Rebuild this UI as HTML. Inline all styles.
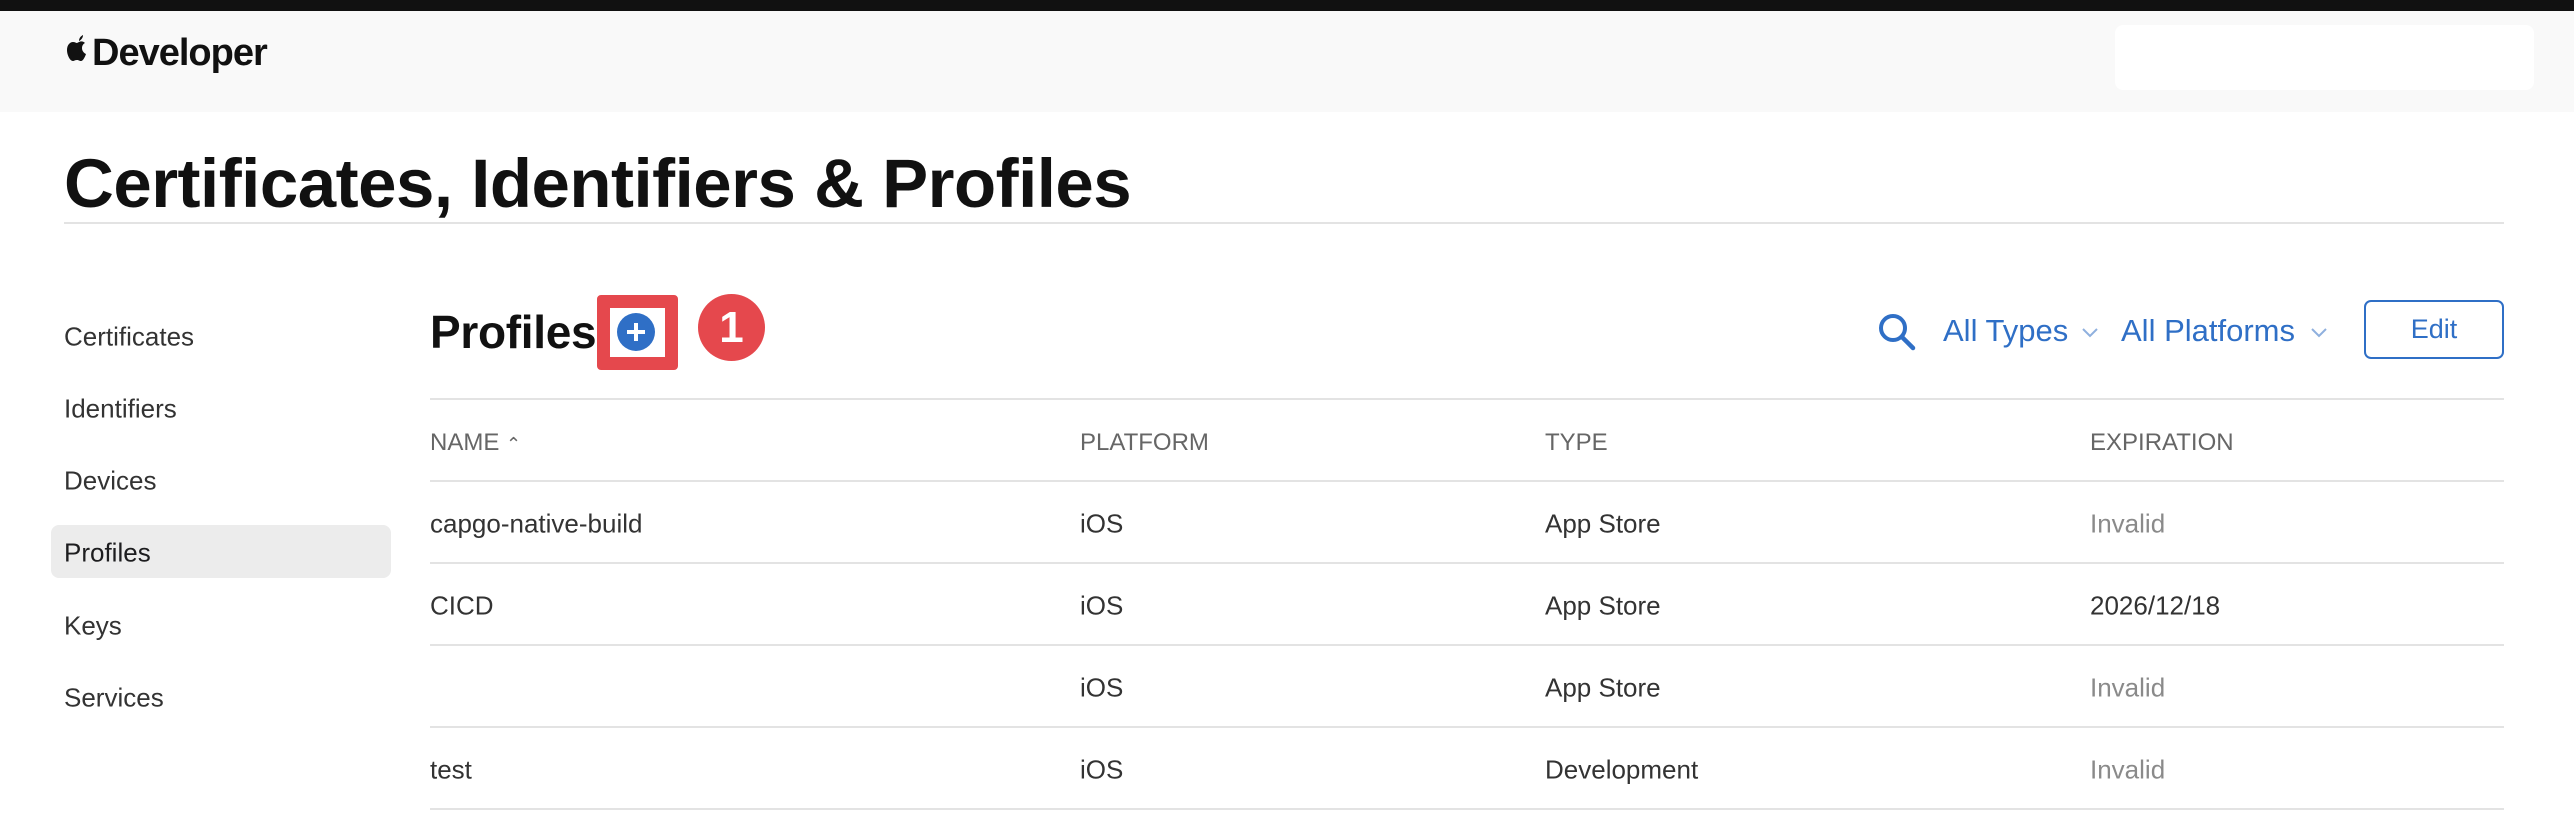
<!DOCTYPE html>
<html><head><meta charset="utf-8"><style>
*{margin:0;padding:0;box-sizing:border-box}
body{width:2574px;height:834px;background:#fff;font-family:"Liberation Sans",sans-serif;color:#1d1d1f;position:relative;overflow:hidden}
.a{position:absolute;white-space:nowrap}
.bar{left:0;top:0;width:2574px;height:11px;background:#111}
.hdr{left:0;top:11px;width:2574px;height:101px;background:#f9f9f9}
.box{left:2115px;top:25px;width:419px;height:65px;background:#fff;border-radius:8px}
.side{left:64px;font-size:26px;color:#333;transform:translateY(-50%)}
.cell{font-size:26px;color:#333;transform:translateY(-50%)}
.th{font-size:24px;color:#666;transform:translateY(-50%)}
.line{height:2px;background:#e3e3e3}
.blue{color:#2f6fc6}
.gray{color:#8a8a8a}
</style></head><body>
<div class="a bar"></div>
<div class="a hdr"></div>
<div class="a box"></div>
<div class="a" style="left:92px;top:32px;font-size:38px;letter-spacing:-1px;color:#111;font-weight:bold">Developer</div>
<svg class="a" style="left:66px;top:33px" width="26" height="32" viewBox="0 0 26 32"><path fill="#111" d="M13 9c2-1 4-1 6 1-2 1-3 3-3 5 0 3 2 5 4 6-1 3-3 7-5 7-2 0-2-1-4-1s-3 1-4 1c-3 0-6-6-6-11 0-5 3-8 6-8 2 0 3 1 4 1zM13 8c0-3 2-5 4-6 0 3-2 5-4 6z"/></svg>
<div class="a" style="left:64px;top:144px;font-size:69px;font-weight:bold;color:#111;letter-spacing:-0.5px">Certificates, Identifiers &amp; Profiles</div>
<div class="a line" style="left:64px;top:222px;width:2440px"></div>

<div class="a" style="left:51px;top:525px;width:340px;height:53px;background:#ececec;border-radius:8px"></div>
<div class="a side" style="top:337px">Certificates</div>
<div class="a side" style="top:409px">Identifiers</div>
<div class="a side" style="top:481px">Devices</div>
<div class="a side" style="top:553px;color:#1d1d1f">Profiles</div>
<div class="a side" style="top:626px">Keys</div>
<div class="a side" style="top:698px">Services</div>

<div class="a" style="left:430px;top:305px;font-size:46px;font-weight:bold;color:#111;letter-spacing:-0.3px">Profiles</div>
<div class="a" style="left:597px;top:295px;width:81px;height:75px;border:13px solid #e5484d;border-radius:4px;background:#fff"></div>
<div class="a" style="left:617px;top:313px;width:38px;height:38px;border-radius:50%;background:#2f6fc6"></div>
<div class="a" style="left:627px;top:330px;width:18px;height:4px;background:#fff"></div>
<div class="a" style="left:634px;top:323px;width:4px;height:18px;background:#fff"></div>
<div class="a" style="left:698px;top:294px;width:67px;height:67px;border-radius:50%;background:#e5484d;color:#fff;font-weight:bold;font-size:44px;text-align:center;line-height:67px">1</div>

<svg class="a" style="left:1877px;top:312px" width="40" height="40" viewBox="0 0 40 40"><circle cx="16" cy="16" r="12" fill="none" stroke="#2f6fc6" stroke-width="4"/><path d="M25 25l11 11" stroke="#2f6fc6" stroke-width="4.5" stroke-linecap="round"/></svg>
<div class="a blue" style="left:1943px;top:313px;font-size:31px">All Types</div>
<svg class="a" style="left:2082px;top:328px" width="16" height="10"><path d="M1 1l7 7 7-7" fill="none" stroke="#8fb0de" stroke-width="2"/></svg>
<div class="a blue" style="left:2121px;top:313px;font-size:31px">All Platforms</div>
<svg class="a" style="left:2311px;top:328px" width="16" height="10"><path d="M1 1l7 7 7-7" fill="none" stroke="#8fb0de" stroke-width="2"/></svg>
<div class="a" style="left:2364px;top:300px;width:140px;height:59px;border:2px solid #2f6fc6;border-radius:7px;color:#2f6fc6;font-size:27px;text-align:center;line-height:55px">Edit</div>

<div class="a line" style="left:430px;top:398px;width:2074px"></div>
<div class="a th" style="left:430px;top:443px">NAME <span style="font-size:18px">&#8963;</span></div>
<div class="a th" style="left:1080px;top:443px">PLATFORM</div>
<div class="a th" style="left:1545px;top:443px">TYPE</div>
<div class="a th" style="left:2090px;top:443px">EXPIRATION</div>
<div class="a line" style="left:430px;top:480px;width:2074px"></div>

<div class="a cell" style="left:430px;top:524px">capgo-native-build</div>
<div class="a cell" style="left:1080px;top:524px">iOS</div>
<div class="a cell" style="left:1545px;top:524px">App Store</div>
<div class="a cell gray" style="left:2090px;top:524px">Invalid</div>
<div class="a line" style="left:430px;top:562px;width:2074px"></div>

<div class="a cell" style="left:430px;top:606px">CICD</div>
<div class="a cell" style="left:1080px;top:606px">iOS</div>
<div class="a cell" style="left:1545px;top:606px">App Store</div>
<div class="a cell" style="left:2090px;top:606px">2026/12/18</div>
<div class="a line" style="left:430px;top:644px;width:2074px"></div>

<div class="a cell" style="left:1080px;top:688px">iOS</div>
<div class="a cell" style="left:1545px;top:688px">App Store</div>
<div class="a cell gray" style="left:2090px;top:688px">Invalid</div>
<div class="a line" style="left:430px;top:726px;width:2074px"></div>

<div class="a cell" style="left:430px;top:770px">test</div>
<div class="a cell" style="left:1080px;top:770px">iOS</div>
<div class="a cell" style="left:1545px;top:770px">Development</div>
<div class="a cell gray" style="left:2090px;top:770px">Invalid</div>
<div class="a line" style="left:430px;top:808px;width:2074px"></div>
</body></html>
